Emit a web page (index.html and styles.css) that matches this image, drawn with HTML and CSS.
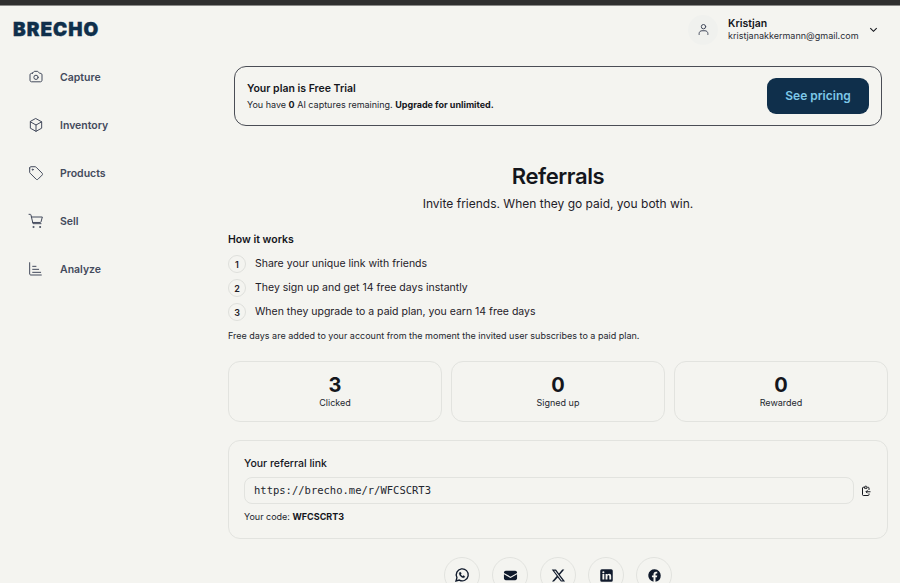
FILE: index.html
```html
<!DOCTYPE html>
<html lang="en">
<head>
    <meta charset="UTF-8">
    <meta name="viewport" content="width=device-width, initial-scale=1.0">
    <title>Brecho - Referrals</title>
    <link rel="stylesheet" href="styles.css">
</head>
<body>
    <div class="top-strip"></div>
    <div class="app">
        <aside class="sidebar">
            <div class="logo">BRECHO</div>
            <nav class="nav">
                <a class="nav-item">
                    <svg class="nav-icon" viewBox="0 0 24 24"><path d="M6.800 6.200c-.9.100-1.700.3-2.400.5C3.500 7 3 7.800 3 8.700V17c0 1.200 1 2.200 2.200 2.200h13.600c1.200 0 2.200-1 2.200-2.200V8.700c0-.9-.5-1.700-1.400-2-.7-.2-1.500-.4-2.400-.5-.4-.1-.7-.3-.9-.6l-.8-1.300c-.3-.5-.8-.8-1.400-.8h-4.200c-.6 0-1.100.3-1.400.8l-.8 1.300c-.2.300-.5.500-.9.600z"/><circle cx="12" cy="12.500" r="3.200"/></svg>
                    <span>Capture</span>
                </a>
                <a class="nav-item">
                    <svg class="nav-icon" viewBox="0 0 24 24"><path d="M12 2.500l8.500 4.700v9.600L12 21.500l-8.500-4.700V7.200z"/><path d="M3.500 7.200L12 12l8.500-4.800M12 12v9.500"/></svg>
                    <span>Inventory</span>
                </a>
                <a class="nav-item">
                    <svg class="nav-icon" viewBox="0 0 24 24"><path d="M2.500 4.500v6.300c0 .6.200 1.100.7 1.500l9 9c.8.800 2 .8 2.800 0l6.200-6.200c.8-.8.800-2 0-2.800l-9-9c-.4-.4-.9-.7-1.500-.7H4.500c-1.100 0-2 .9-2 1.900z"/><circle cx="7" cy="7" r=".8"/></svg>
                    <span>Products</span>
                </a>
                <a class="nav-item">
                    <svg class="nav-icon" viewBox="0 0 24 24"><path d="M1.500 2h1.900c.5 0 .9.300 1 .8L7.500 16h12M5 6h16.500l-2 7.400c-.1.500-.6.800-1 .8H7"/><circle cx="8" cy="21" r=".8"/><circle cx="18" cy="21" r=".8"/></svg>
                    <span>Sell</span>
                </a>
                <a class="nav-item">
                    <svg class="nav-icon" viewBox="0 0 24 24"><path d="M2.500 2.500v17c0 .8.700 1.500 1.500 1.500h16M7 8h5M7 12.500h9M7 17h12"/></svg>
                    <span>Analyze</span>
                </a>
            </nav>
        </aside>

        <main class="main">
            <header class="topbar">
                <div class="avatar">
                    <svg viewBox="0 0 24 24"><circle cx="12" cy="7.500" r="3.500"/><path d="M5 20v-1.500c0-2.500 2-4.500 4.500-4.500h5c2.500 0 4.500 2 4.500 4.500V20"/></svg>
                </div>
                <div class="user">
                    <div class="user-name">Kristjan</div>
                    <div class="user-email">kristjanakkermann@gmail.com</div>
                </div>
                <svg class="chevron" viewBox="0 0 24 24"><path d="M5 9l7 7 7-7"/></svg>
            </header>

            <section class="plan">
                <div class="plan-info">
                    <h2 class="plan-title">Your plan is Free Trial</h2>
                    <p class="plan-text">You have <strong>0</strong> AI captures remaining. <strong>Upgrade for unlimited.</strong></p>
                </div>
                <button class="plan-btn">See pricing</button>
            </section>

            <div class="heading">
                <h1>Referrals</h1>
                <p>Invite friends. When they go paid, you both win.</p>
            </div>

            <h3 class="how-title">How it works</h3>
            <ol class="steps">
                <li><span class="step-num">1</span>Share your unique link with friends</li>
                <li><span class="step-num">2</span>They sign up and get 14 free days instantly</li>
                <li><span class="step-num">3</span>When they upgrade to a paid plan, you earn 14 free days</li>
            </ol>
            <p class="note">Free days are added to your account from the moment the invited user subscribes to a paid plan.</p>

            <div class="stats">
                <div class="stat"><div class="stat-value">3</div><div class="stat-label">Clicked</div></div>
                <div class="stat"><div class="stat-value">0</div><div class="stat-label">Signed up</div></div>
                <div class="stat"><div class="stat-value">0</div><div class="stat-label">Rewarded</div></div>
            </div>

            <section class="link-card">
                <div class="link-title">Your referral link</div>
                <div class="link-row">
                    <div class="link-input">https://brecho.me/r/WFCSCRT3</div>
                    <svg class="copy" viewBox="0 0 24 24"><path d="M9 4.500H6.500C5.700 4.500 5 5.200 5 6v13.500c0 .8.700 1.500 1.500 1.500h10c.8 0 1.500-.7 1.500-1.500V17M18 10V6c0-.8-.7-1.500-1.500-1.500H15"/><path d="M9 6.500V4.500c0-1 .8-2 1.500-2h2c.7 0 1.500 1 1.500 2v2z"/><path d="M21 13.500h-9M15 10.500l-3 3 3 3"/></svg>
                </div>
                <div class="link-code">Your code: <strong>WFCSCRT3</strong></div>
            </section>

            <div class="share">
                <a class="share-btn">
                    <svg viewBox="0 0 24 24" class="share-line"><path d="M3 21l1.400-5.100A9 9 0 1 1 8 19.600z"/><path class="thin" d="M9 8c-.6 0-1.200.7-1.200 1.700 0 2.800 3.600 6.400 6.500 6.400 1 0 1.800-.7 1.800-1.400l-.1-.9-2-.9-.9 1c-1.300-.4-2.500-1.600-3-3l.9-.9-.8-2z"/></svg>
                </a>
                <a class="share-btn">
                    <svg viewBox="0 0 24 24"><path d="M1.500 7.500c0-1.700 1.300-3 3-3h15c1.700 0 3 1.300 3 3v.3l-10.500 6L1.500 7.800z"/><path d="M1.500 10.100V16.500c0 1.700 1.300 3 3 3h15c1.700 0 3-1.300 3-3v-6.400l-10.500 6z"/></svg>
                </a>
                <a class="share-btn">
                    <svg viewBox="0 0 24 24"><path d="M18 2.500h3.300l-7.200 8.200 8.400 11h-6.600l-5.200-6.700-5.900 6.700H1.500l7.700-8.800-8-10.400H8l4.700 6.200zm-1.200 17.300h1.800L6.900 4.300h-2z"/></svg>
                </a>
                <a class="share-btn">
                    <svg viewBox="0 0 24 24"><path fill-rule="evenodd" d="M4.500 2h15A2.500 2.500 0 0 1 22 4.500v15a2.500 2.500 0 0 1-2.500 2.500h-15A2.500 2.500 0 0 1 2 19.500v-15A2.500 2.500 0 0 1 4.500 2zM5.500 9.500v9h3v-9zM7 5a1.700 1.700 0 1 0 0 3.400A1.700 1.700 0 0 0 7 5zm3.500 4.500v9h3v-4.700c0-1.300.5-2.100 1.600-2.100s1.400.8 1.400 2.100v4.700h3v-5.400c0-2.600-1.300-3.800-3.300-3.800-1.300 0-2.200.6-2.700 1.400V9.500z"/></svg>
                </a>
                <a class="share-btn">
                    <svg viewBox="0 0 24 24"><path d="M22 12a10 10 0 1 0-11.600 9.900v-7H7.900V12h2.500V9.800c0-2.500 1.500-3.900 3.800-3.900 1.100 0 2.200.2 2.200.2v2.500h-1.200c-1.200 0-1.600.8-1.600 1.600V12h2.800l-.5 2.900h-2.300v7A10 10 0 0 0 22 12z"/></svg>
                </a>
            </div>
        </main>
    </div>
</body>
</html>
```

FILE: styles.css
```css
* {
    margin: 0;
    padding: 0;
    box-sizing: border-box;
    font-family: 'Inter', sans-serif;
}

html, body {
    height: 583px;
    overflow: hidden;
}

body {
    background-color: #f4f4f0;
    color: #14161c;
}

.top-strip {
    height: 6px;
    background-color: #2f2f2f;
    border-bottom: 1px solid #8a8a88;
}

.app {
    display: flex;
}

.sidebar {
    width: 228px;
    flex-shrink: 0;
}

.logo {
    padding: 12px 0 0 13px;
    height: 47px;
    font-size: 19px;
    line-height: 24px;
    font-weight: 900;
    letter-spacing: 1px;
    -webkit-text-stroke: 0.4px #0f2f4b;
    color: #0f2f4b;
}

.nav {
    display: flex;
    flex-direction: column;
}

.nav-item {
    display: flex;
    align-items: center;
    height: 48px;
    padding-left: 28px;
    font-size: 10.500px;
    font-weight: 600;
    color: #434a5c;
    gap: 16px;
}

.nav-icon {
    width: 16px;
    height: 16px;
    fill: none;
    stroke: #434a5c;
    stroke-width: 1.500;
    stroke-linecap: round;
    stroke-linejoin: round;
}

.main {
    width: 660px;
    flex-shrink: 0;
}

.topbar {
    display: flex;
    align-items: center;
    height: 47px;
    padding-left: 460px;
}

.avatar {
    width: 30px;
    height: 30px;
    border-radius: 50%;
    background-color: #f0f1ee;
    display: flex;
    align-items: center;
    justify-content: center;
    margin-right: 10px;
}

.avatar svg {
    width: 15px;
    height: 15px;
    fill: none;
    stroke: #434a5c;
    stroke-width: 1.600;
    stroke-linecap: round;
}

.user-name {
    font-size: 10.500px;
    line-height: 13px;
    font-weight: 600;
}

.user-email {
    font-size: 9px;
    line-height: 12px;
    color: #2a2d36;
}

.chevron {
    width: 11px;
    height: 11px;
    margin-left: 9px;
    fill: none;
    stroke: #14161c;
    stroke-width: 2.400;
}

.plan {
    display: flex;
    justify-content: space-between;
    align-items: center;
    margin: 13px 6px 0 6px;
    height: 60px;
    padding: 0 12px;
    border: 1px solid #4a4d55;
    border-radius: 12px;
}

.plan-info {
    padding-top: 2px;
}

.plan-title {
    font-size: 10.500px;
    line-height: 15px;
    font-weight: 600;
}

.plan-text {
    font-size: 9px;
    line-height: 16px;
    margin-top: 1px;
    color: #23262e;
}

.plan-text strong {
    font-weight: 700;
    color: #14161c;
}

.plan-btn {
    width: 102px;
    height: 36px;
    padding-bottom: 2px;
    border: none;
    border-radius: 9px;
    background-color: #0f2f4b;
    color: #7ec8e8;
    font-size: 12px;
    font-weight: 600;
}

.heading {
    text-align: center;
    margin-top: 34px;
}

.heading h1 {
    font-size: 22px;
    line-height: 32px;
    font-weight: 600;
    letter-spacing: -0.400px;
}

.heading p {
    font-size: 12px;
    line-height: 20px;
    margin-top: 2px;
    color: #1e2028;
}

.how-title {
    margin-top: 17px;
    font-size: 10.500px;
    line-height: 18px;
    font-weight: 600;
}

.steps {
    list-style: none;
    margin-top: 2px;
}

.steps li {
    display: flex;
    align-items: center;
    height: 24px;
    font-size: 10.500px;
    color: #1e2028;
}

.step-num {
    width: 18px;
    height: 18px;
    margin-right: 9px;
    border: 1px solid #dfe0dc;
    border-radius: 50%;
    display: flex;
    align-items: center;
    justify-content: center;
    font-size: 9px;
    font-weight: 600;
    position: relative;
    top: 1px;
}

.note {
    font-size: 9px;
    line-height: 14px;
    margin-top: 6px;
    color: #23262e;
}

.stats {
    display: grid;
    grid-template-columns: repeat(3, 214px);
    gap: 9px;
    margin-top: 18px;
}

.stat {
    height: 61px;
    border: 1px solid #e2e3df;
    border-radius: 12px;
    text-align: center;
    padding-top: 12px;
}

.stat-value {
    font-size: 20px;
    line-height: 22px;
    font-weight: 700;
}

.stat-label {
    font-size: 9px;
    line-height: 13px;
    color: #23262e;
}

.link-card {
    width: 660px;
    height: 99px;
    margin-top: 18px;
    padding: 15px 15px 0 15px;
    border: 1px solid #e2e3df;
    border-radius: 12px;
}

.link-title {
    font-size: 10.500px;
    line-height: 15px;
    font-weight: 500;
}

.link-row {
    display: flex;
    align-items: center;
    gap: 6px;
    margin-top: 6px;
}

.link-input {
    flex: 1;
    height: 27px;
    padding-left: 9px;
    border: 1px solid #e2e3df;
    border-radius: 8px;
    font-family: 'DejaVu Sans Mono', monospace;
    font-size: 10.500px;
    line-height: 25px;
    color: #23262e;
}

.copy {
    width: 12px;
    height: 12px;
    fill: none;
    stroke: #14161c;
    stroke-width: 2;
}

.link-code {
    margin-top: 6px;
    font-size: 9px;
    line-height: 14px;
    color: #23262e;
}

.link-code strong {
    font-weight: 700;
    color: #14161c;
}

.share {
    display: flex;
    justify-content: center;
    gap: 12px;
    margin-top: 18px;
}

.share-btn {
    width: 36px;
    height: 36px;
    flex-shrink: 0;
    border: 1px solid #e2e3df;
    border-radius: 50%;
    display: flex;
    align-items: center;
    justify-content: center;
}

.share-btn svg {
    width: 15px;
    height: 15px;
    fill: #101a2c;
}

.share-btn .share-line {
    width: 16px;
    height: 16px;
    fill: none;
    stroke: #101a2c;
    stroke-width: 2;
}

.share-line .thin {
    fill: #101a2c;
    stroke-width: 0.500;
}
```
